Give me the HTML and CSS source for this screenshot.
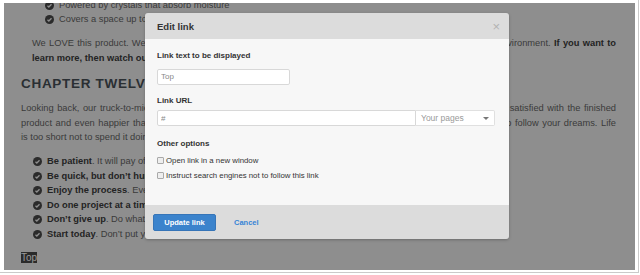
FILE: index.html
```html
<!DOCTYPE html>
<html lang="en">
<head>
  <meta charset="UTF-8" />
  <title>Edit link</title>
  <link rel="stylesheet" href="styles.css">
</head>
<body>
  <div class="frame">
    <div class="screen">

      <div class="page">
        <ul class="checks first">
          <li><svg class="ok" viewBox="0 0 16 16"><circle cx="8" cy="8" r="8"/><path d="M4.4 8.3l2.4 2.3 4.8-4.9"/></svg>Powered by crystals that absorb moisture</li>
          <li><svg class="ok" viewBox="0 0 16 16"><circle cx="8" cy="8" r="8"/><path d="M4.4 8.3l2.4 2.3 4.8-4.9"/></svg>Covers a space up to 1,000 square feet</li>
        </ul>

        <p class="indent">
          <span class="ln">We LOVE this product. We think it is a really clever way to keep your home dry while also caring for the local environment. <b>If you want to</b></span>
          <b>learn more, then watch our video below.</b>
        </p>

        <h2>CHAPTER TWELVE</h2>

        <p>
          <span class="ln">Looking back, our truck-to-micro home journey was long, but we are really so happy with how it all turned out and satisfied with the finished</span>
          <span class="ln">product and even happier that we did every single bit of it ourselves. We do hope our own story encourages you to follow your dreams. Life</span>
          is too short not to spend it doing what you love.
        </p>

        <ul class="checks">
          <li><svg class="ok" viewBox="0 0 16 16"><circle cx="8" cy="8" r="8"/><path d="M4.4 8.3l2.4 2.3 4.8-4.9"/></svg><span><b>Be patient</b>. It will pay off in the end.</span></li>
          <li><svg class="ok" viewBox="0 0 16 16"><circle cx="8" cy="8" r="8"/><path d="M4.4 8.3l2.4 2.3 4.8-4.9"/></svg><span><b>Be quick, but don’t hurry</b>.</span></li>
          <li><svg class="ok" viewBox="0 0 16 16"><circle cx="8" cy="8" r="8"/><path d="M4.4 8.3l2.4 2.3 4.8-4.9"/></svg><span><b>Enjoy the process</b>. Every day is a step.</span></li>
          <li><svg class="ok" viewBox="0 0 16 16"><circle cx="8" cy="8" r="8"/><path d="M4.4 8.3l2.4 2.3 4.8-4.9"/></svg><span><b>Do one project at a time</b>.</span></li>
          <li><svg class="ok" viewBox="0 0 16 16"><circle cx="8" cy="8" r="8"/><path d="M4.4 8.3l2.4 2.3 4.8-4.9"/></svg><span><b>Don’t give up</b>. Do what you can.</span></li>
          <li><svg class="ok" viewBox="0 0 16 16"><circle cx="8" cy="8" r="8"/><path d="M4.4 8.3l2.4 2.3 4.8-4.9"/></svg><span><b>Start today</b>. Don’t put your dreams on hold.</span></li>
        </ul>

        <p><a class="sel" href="#">Top</a></p>
      </div>

      <div class="modal">
        <div class="modal-head">
          <h3>Edit link</h3>
          <span class="close">×</span>
        </div>

        <div class="modal-body">
          <div class="field">
            <label>Link text to be displayed</label>
            <input class="txt short" type="text" value="Top">
          </div>

          <div class="field">
            <label>Link URL</label>
            <div class="url-row">
              <input class="txt" type="text" value="#">
              <div class="pick"><span>Your pages</span><i class="caret"></i></div>
            </div>
          </div>

          <div class="field">
            <label>Other options</label>
            <div class="opt"><input type="checkbox"> Open link in a new window</div>
            <div class="opt"><input type="checkbox"> Instruct search engines not to follow this link</div>
          </div>
        </div>

        <div class="modal-foot">
          <button>Update link</button>
          <a class="cancel" href="#">Cancel</a>
        </div>
      </div>

    </div>
  </div>
</body>
</html>
```

FILE: styles.css
```css
body {
  margin: 0;
  background: #fff;
  font-family: "Liberation Sans", Arial, sans-serif;
}

.frame {
  box-sizing: border-box;
  width: 639px;
  height: 273px;
  padding: 3px 3px 2px 4px;
  border-right: 1px solid #cacaca;
  border-bottom: 1px solid #cacaca;
}

.screen {
  position: relative;
  height: 100%;
  background: #8e8e8e;
  overflow: hidden;
}

/* page behind the dialog */
.page {
  padding: 0 19px 0 17px;
  font-size: 9.3px;
  line-height: 14.5px;
  color: #3a3a3a;
}

.page b {
  color: #232323;
}

.page p {
  margin: 9.5px 0;
}

.indent {
  margin-left: 11px !important;
}

.ln {
  display: block;
  text-align: justify;
  text-align-last: justify;
}

.page h2 {
  margin: 10.5px 0 0;
  font-size: 13.5px;
  line-height: 16px;
  letter-spacing: 0.7px;
  color: #2a2f33;
}

.checks {
  list-style: none;
  margin: 9.5px 0;
  padding-left: 12px;
}

.checks.first {
  margin-top: -5.25px;
  padding-left: 24px;
}

.checks li {
  display: flex;
  align-items: center;
  gap: 5px;
}

.ok {
  width: 9px;
  height: 9px;
  flex: none;
}

.ok circle {
  fill: #2b2b2b;
}

.ok path {
  fill: none;
  stroke: #8e8e8e;
  stroke-width: 2.4;
}

.sel {
  background: #2a2a2a;
  color: #9a9a9a;
  text-decoration: none;
  font-size: 10px;
}

/* dialog */
.modal {
  position: absolute;
  left: 141px;
  top: 10px;
  width: 364px;
  border-radius: 3px;
  overflow: hidden;
  box-shadow: 0 1px 3px rgba(0,0,0,0.25);
}

.modal-head {
  height: 26px;
  background: #dcdcdc;
  display: flex;
  align-items: center;
  justify-content: space-between;
  padding: 0 9px 0 12px;
}

.modal-head h3 {
  margin: 0;
  font-size: 9.5px;
  color: #333;
}

.close {
  font-size: 13px;
  color: #b3b3b3;
}

.modal-body {
  box-sizing: border-box;
  height: 166px;
  background: #f7f7f7;
  padding: 11px 14px 0 12px;
}

.field {
  margin-bottom: 10.5px;
}

.field label {
  display: block;
  font-size: 8px;
  font-weight: bold;
  line-height: 11px;
  color: #333;
  margin-bottom: 4px;
}

.txt {
  box-sizing: border-box;
  height: 16px;
  margin: 0;
  padding: 0 3px;
  border: 1px solid #d8d8d8;
  border-radius: 2px;
  background: #fff;
  font-family: "Liberation Sans", Arial, sans-serif;
  font-size: 8px;
  color: #888;
  outline: none;
}

.short {
  width: 133px;
}

.url-row {
  display: flex;
  margin-bottom: 12px;
}

.url-row .txt {
  flex: 1;
  border-radius: 2px 0 0 2px;
}

.pick {
  box-sizing: border-box;
  width: 79px;
  height: 16px;
  display: flex;
  align-items: center;
  justify-content: space-between;
  padding: 0 5px 0 5px;
  border: 1px solid #e0e0e0;
  border-left: none;
  border-radius: 0 2px 2px 0;
  background: #fff;
  font-size: 8.5px;
  color: #9a9a9a;
}

.caret {
  width: 0;
  height: 0;
  border-left: 3px solid transparent;
  border-right: 3px solid transparent;
  border-top: 3px solid #777;
}

.opt {
  display: flex;
  align-items: center;
  gap: 2px;
  height: 15px;
  font-size: 7.8px;
  color: #333;
}

.field label + .opt {
  margin-top: 4px;
}

.opt input {
  appearance: none;
  box-sizing: border-box;
  width: 7px;
  height: 7px;
  margin: 0;
  border: 1px solid #a9a9a9;
  border-radius: 1px;
  background: #eee;
}

.modal-foot {
  height: 34px;
  background: #dcdcdc;
  display: flex;
  align-items: center;
  gap: 18px;
  padding: 0 8px;
}

.modal-foot button {
  box-sizing: border-box;
  width: 63px;
  height: 17px;
  padding: 0;
  border: 1px solid #3675b8;
  border-radius: 2px;
  background: #3b83cc;
  color: #fff;
  font-family: "Liberation Sans", Arial, sans-serif;
  font-size: 7.5px;
  font-weight: bold;
}

.cancel {
  color: #3584d6;
  font-size: 7.5px;
  font-weight: bold;
  text-decoration: none;
}
```
